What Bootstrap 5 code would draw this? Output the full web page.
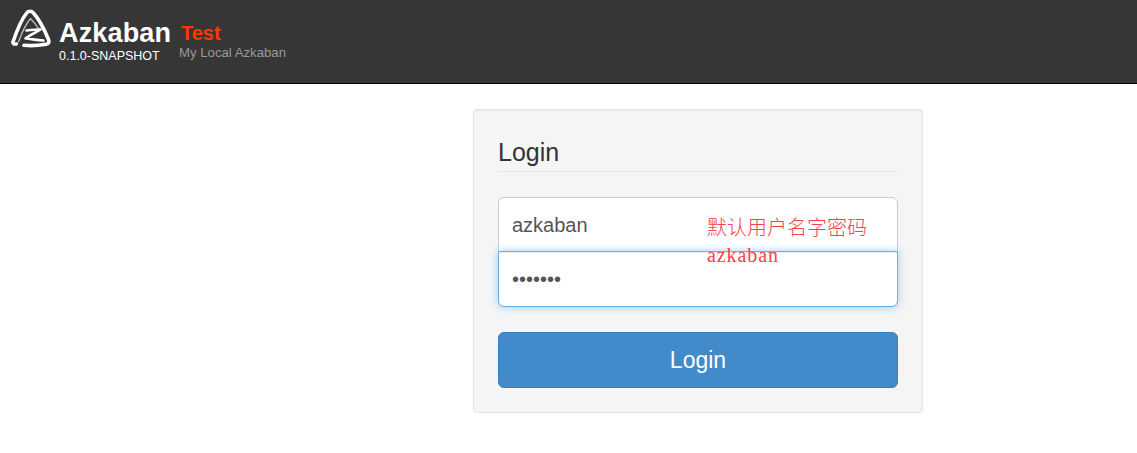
<!DOCTYPE html>
<html lang="en">
<head>
<meta charset="utf-8">
<title>Azkaban</title>
<link href="https://cdn.jsdelivr.net/npm/bootstrap@5.3.0/dist/css/bootstrap.min.css" rel="stylesheet">
<style>
html, body { height: 100%; }
body { font-family: "Liberation Sans", Arial, sans-serif; color: #333; background: #fff; overflow: hidden; }
.top-bar { height: 84px; background: #363636; border-bottom: 1px solid #000; padding: 9px 0 0 10px; }
.logo-mark { width: 42px; height: 40px; flex: none; filter: blur(.5px); }
.brand-block { margin-left: 7px; width: 120px; }
.brand-name { font-size: 27px; line-height: 30px; font-weight: 700; color: #fff; margin-top: 9px; letter-spacing: .15px; }
.brand-ver { font-size: 12.5px; line-height: 14px; color: #fff; margin-top: 1px; }
.env-block { margin-top: 13px; }
.env-name { font-size: 20px; line-height: 22px; font-weight: 700; color: #ff3601; padding-left: 2px; }
.env-desc { font-size: 13.2px; line-height: 14px; color: #999; margin-top: 2px; }
.login-wrap { padding: 25px 0 0 473px; }
.login-panel { position: relative; width: 450px; height: 304px; background: #f5f5f5; border: 1px solid #e3e3e3; border-radius: 4px; padding: 24px; box-shadow: inset 0 1px 1px rgba(0,0,0,.05); }
.login-title { font-size: 25px; line-height: 36px; font-weight: 400; color: #333; border-bottom: 1px solid #e5e5e5; height: 38px; margin: 0 0 25px; }
.field-stack .form-control { height: 55px; font-size: 20px; color: #555; padding: 10px 13px; box-shadow: none; font-family: "Liberation Sans", Arial, sans-serif; }
.field-stack .field-user { border: 1px solid #ccc; border-radius: 6px 6px 0 0; margin-bottom: -1px; padding-top: 12px; }
.field-stack .field-pass, .field-stack .field-pass:focus { position: relative; height: 56px; border: 1px solid #66afe9; border-radius: 0 0 6px 6px; box-shadow: inset 0 1px 1px rgba(0,0,0,.075), 0 0 8px rgba(102,175,233,.6); }
.go-btn, .go-btn:hover { height: 56px; margin-top: 25px; font-size: 23px; background: #428bca; border: 1px solid #357ebd; border-radius: 6px; color: #fff; }
.note-text { position: absolute; left: 233px; top: 105px; font-family: "Liberation Serif", "Noto Sans CJK SC", serif; font-size: 20px; font-weight: 300; line-height: 27px; color: #f5424d; z-index: 3; }
.note-latin { letter-spacing: .9px; }
</style>
</head>
<body>
<header class="top-bar d-flex align-items-start">
  <svg class="logo-mark" viewBox="0 0 42 40" fill="none" stroke="#fff" stroke-linecap="round" stroke-linejoin="round" aria-hidden="true">
    <path d="M3 33 C6 24 11 11 17 3.500 C18.500 1.800 21.500 1.800 23 3.500 C30 11 35 22 38.500 30.500 C39.500 33.500 38.500 35 36 35.300 C29 36.500 21 37 14 36.300" stroke-width="3.600"/>
    <path d="M3 33 C2.800 35 4 35.500 6.500 35" stroke-width="3.400"/>
    <path d="M8.500 33 C11 26 15 16 20.500 9.500 C24 13 27 17 29.500 21" stroke-width="1.200" opacity=".7"/>
    <path d="M16.500 21.500 C21 21 26 20.500 30.500 20.500 C26 23.500 20 26 15.500 29.500 C21 30 27 31 33.500 31.500" stroke-width="2.600"/>
  </svg>
  <div class="brand-block">
    <div class="brand-name">Azkaban</div>
    <div class="brand-ver">0.1.0-SNAPSHOT</div>
  </div>
  <div class="env-block">
    <div class="env-name">Test</div>
    <div class="env-desc">My Local Azkaban</div>
  </div>
</header>
<main class="login-wrap">
  <form class="login-panel" onsubmit="return false">
    <h3 class="login-title">Login</h3>
    <div class="field-stack">
      <input class="form-control field-user" type="text" value="azkaban" aria-label="Username">
      <input class="form-control field-pass" type="password" value="azkaban" aria-label="Password">
    </div>
    <button class="btn go-btn w-100" type="submit">Login</button>
    <div class="note-text">默认用户名字密码<br><span class="note-latin">azkaban</span></div>
  </form>
</main>
<script src="https://cdn.jsdelivr.net/npm/bootstrap@5.3.0/dist/js/bootstrap.bundle.min.js"></script>
</body>
</html>
